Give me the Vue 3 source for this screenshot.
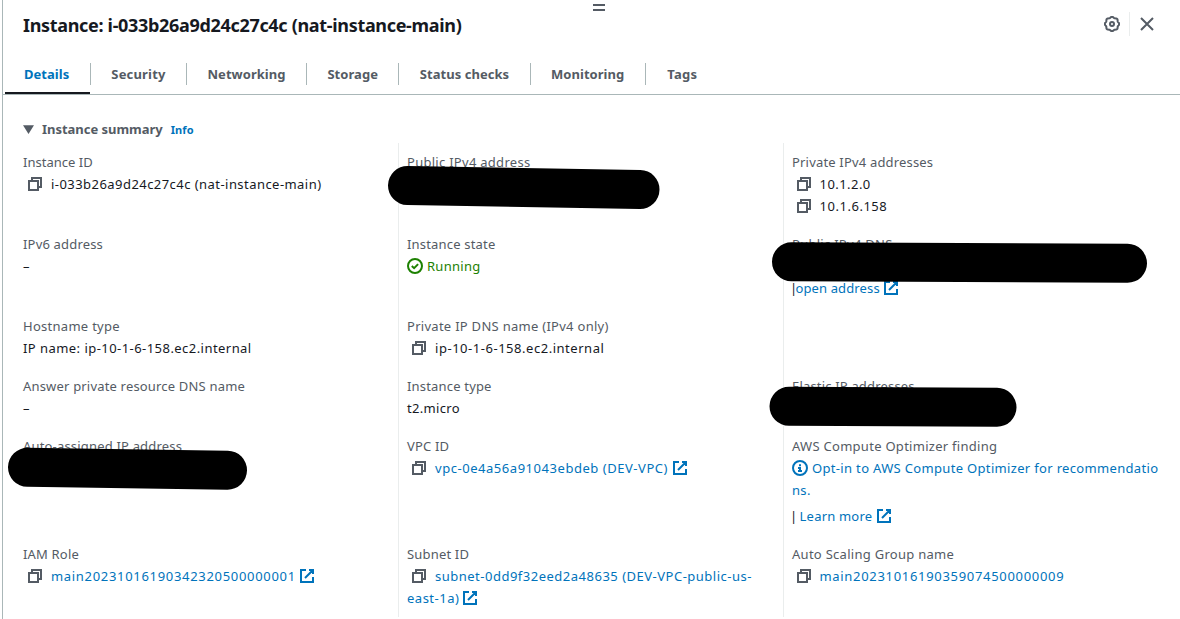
<script setup>
import { h } from 'vue'

const tabs = ['Details', 'Security', 'Networking', 'Storage', 'Status checks', 'Monitoring', 'Tags']

const svg = (name, children) =>
  h('svg', { class: 'icon icon-' + name, viewBox: '0 0 16 16', width: 16, height: 16, fill: 'none', stroke: 'currentColor', 'stroke-width': 2 }, children)

const CopyIcon = () => svg('copy', [h('path', { d: 'M2 5h9v9H2zM5 5V2h9v9h-3' })])
const ExternalIcon = () => svg('external', [h('path', { d: 'M10 2h4v4M6 10l8-8M14 9.05V14H2V2h5' })])
const CheckIcon = () => svg('check', [h('circle', { cx: 8, cy: 8, r: 7 }), h('path', { d: 'M4.8 8.1l2.3 2.1 4-4.1' })])
const InfoIcon = () => svg('info', [h('circle', { cx: 8, cy: 8, r: 7 }), h('path', { d: 'M8 11V8H6M10 11H6' }), h('path', { d: 'M7 5.2h2' })])
const CloseIcon = () => svg('close', [h('path', { d: 'M2 2l12 12M14 2L2 14' })])

const gearPath = Array.from({ length: 96 }, (_, i) => {
  const a = (i / 96) * Math.PI * 2
  const r = 6.75 + 0.5 * Math.cos(8 * a)
  return (i ? 'L' : 'M') + (8 + r * Math.cos(a)).toFixed(2) + ' ' + (8 + r * Math.sin(a)).toFixed(2)
}).join('') + 'Z'
const GearIcon = () => svg('gear', [h('path', { d: gearPath }), h('circle', { cx: 8, cy: 8, r: 2 })])
</script>

<template>
  <section class="panel">
    <div class="handle"></div>
    <header class="header">
      <h2 class="title">Instance: i-033b26a9d24c27c4c (nat-instance-main)</h2>
      <div class="actions">
        <button class="action"><GearIcon /></button>
        <button class="action close"><CloseIcon /></button>
      </div>
    </header>

    <nav class="tabs">
      <div v-for="(tab, i) in tabs" :key="tab" class="tab" :class="{ active: i === 0 }">
        <span class="tab-label">{{ tab }}</span>
      </div>
    </nav>

    <div class="summary">
      <svg class="caret" width="11" height="9" viewBox="0 0 11 9"><path d="M0 0.2h11L5.5 9z" fill="currentColor" /></svg>
      <span class="summary-title">Instance summary</span>
      <a class="info">Info</a>
    </div>

    <div class="grid">
      <div class="cell">
        <div class="label tight">Instance ID</div>
        <div class="value id"><CopyIcon />i-033b26a9d24c27c4c (nat-instance-main)</div>
      </div>
      <div class="cell">
        <div class="label wide">Public IPv4 address</div>
      </div>
      <div class="cell">
        <div class="label">Private IPv4 addresses</div>
        <div class="value id"><CopyIcon />10.1.2.0</div>
        <div class="value ip"><CopyIcon />10.1.6.158</div>
      </div>

      <div class="cell">
        <div class="label">IPv6 address</div>
        <div class="value">–</div>
      </div>
      <div class="cell">
        <div class="label">Instance state</div>
        <div class="value running"><CheckIcon />Running</div>
      </div>
      <div class="cell">
        <div class="label wide">Public IPv4 DNS</div>
        <div class="value blank"></div>
        <div class="value short"><span class="bar">|</span><a>open address</a><ExternalIcon /></div>
      </div>

      <div class="cell">
        <div class="label wide">Hostname type</div>
        <div class="value name">IP name: ip-10-1-6-158.ec2.internal</div>
      </div>
      <div class="cell">
        <div class="label wide">Private IP DNS name (IPv4 only)</div>
        <div class="value ip"><CopyIcon />ip-10-1-6-158.ec2.internal</div>
      </div>
      <div class="cell"></div>

      <div class="cell">
        <div class="label">Answer private resource DNS name</div>
        <div class="value">–</div>
      </div>
      <div class="cell">
        <div class="label">Instance type</div>
        <div class="value optin">t2.micro</div>
      </div>
      <div class="cell">
        <div class="label">Elastic IP addresses</div>
      </div>

      <div class="cell">
        <div class="label">Auto-assigned IP address</div>
      </div>
      <div class="cell">
        <div class="label">VPC ID</div>
        <div class="value vpc"><CopyIcon /><a>vpc-0e4a56a91043ebdeb (DEV-VPC)</a><ExternalIcon /></div>
      </div>
      <div class="cell">
        <div class="label wide">AWS Compute Optimizer finding</div>
        <div class="value optin"><InfoIcon /><a>Opt-in to AWS Compute Optimizer for recommendatio<br>ns.</a></div>
        <div class="value learn"><span class="bar">|</span> <a>Learn more</a><ExternalIcon /></div>
      </div>

      <div class="cell">
        <div class="label">IAM Role</div>
        <div class="value digits"><CopyIcon /><a>main20231016190342320500000001</a><ExternalIcon /></div>
      </div>
      <div class="cell">
        <div class="label">Subnet ID</div>
        <div class="value subnet"><CopyIcon /><a>subnet-0dd9f32eed2a48635 (DEV-VPC-public-us-<br>east-1a)</a><ExternalIcon /></div>
      </div>
      <div class="cell">
        <div class="label wide">Auto Scaling Group name</div>
        <div class="value digits"><CopyIcon /><a>main20231016190359074500000009</a></div>
      </div>
    </div>

    <svg class="redactions" width="1180" height="619" viewBox="0 0 1180 619">
      <path d="M407.5 185.5L640 189.5M791.5 261.8L1127.5 263.3M789 406.3L997 407.3M27.5 467.3L227.5 470.2" />
    </svg>
  </section>
</template>

<style>
body {
  margin: 0;
  background: #fff;
  overflow: hidden;
}
</style>

<style scoped>
.panel {
  position: relative;
  box-sizing: border-box;
  height: 619px;
  margin-left: 2px;
  border-left: 1px solid #aab7b8;
  overflow: hidden;
  background: #fff;
  color: #16191f;
  font: 13px/22px "Noto Sans", "Open Sans", sans-serif;
}
.handle {
  box-sizing: border-box;
  width: 12px;
  height: 7px;
  margin: 4px 0 0 590px;
  border: solid #545b64;
  border-width: 2px 0;
}
.header {
  display: flex;
  justify-content: space-between;
  height: 43px;
  padding: 0 17px 0 20px;
}
.title {
  margin: 0;
  padding-top: 3px;
  font-size: 18px;
  line-height: 22px;
  font-weight: 700;
  letter-spacing: -0.32px;
}
.actions {
  display: flex;
  height: 24px;
  margin-top: 1px;
}
.action {
  display: flex;
  align-items: center;
  padding: 0 9px 0 0;
  border: 0;
  background: none;
  color: #545b64;
}
.action.close {
  padding: 0 8px 0 9px;
  border-left: 1px solid #eaeded;
}
.tabs {
  display: flex;
  height: 40px;
  border-bottom: 1px solid #aab7b8;
}
.tab {
  box-sizing: border-box;
  height: 40px;
  padding-top: 9px;
  color: #545b64;
  font-weight: 700;
  letter-spacing: 0.04px;
}
.tab-label {
  display: block;
  padding: 0 20.45px;
  border-right: 1px solid #aab7b8;
}
.tab:nth-child(2) {
  margin-left: 1px;
  letter-spacing: 0.18px;
}
.tab:last-child {
  letter-spacing: 0.3px;
}
.tab:last-child .tab-label {
  padding-left: 21.5px;
  border-right: 0;
}
.tab.active {
  margin-left: 2px;
  border-bottom: 2px solid #16191f;
  color: #0073bb;
}
.tab.active .tab-label {
  padding-left: 19px;
  padding-right: 20.6px;
  margin-right: -1px;
}
.summary {
  display: flex;
  align-items: center;
  height: 22px;
  margin: 23px 0 0 20px;
  color: #545b64;
}
.caret {
  margin-right: 8px;
}
.summary-title {
  font-weight: 700;
  letter-spacing: -0.03px;
}
.info {
  margin-left: 8px;
  padding-top: 1px;
  font-size: 11px;
  font-weight: 700;
  letter-spacing: 0.1px;
  color: #0073bb;
}
.grid {
  display: grid;
  grid-template-columns: 375px 385px 385px;
  grid-template-rows: 90px 82px 60px 60px 108px 74px;
  margin: 3px 0 0 20px;
}
.cell {
  padding-left: 8px;
  border-left: 1px solid #eaeded;
  white-space: nowrap;
}
.cell:nth-child(3n + 1) {
  padding-left: 0;
  border-left: 0;
}
.cell:nth-child(-n + 3) {
  padding-top: 8px;
}
.label {
  color: #545b64;
  letter-spacing: 0.18px;
}
.label.tight {
  letter-spacing: 0.02px;
}
.label.wide {
  letter-spacing: 0.28px;
}
.value {
  min-height: 22px;
  letter-spacing: 0.2px;
}
.value.id,
.value.name {
  letter-spacing: 0.45px;
}
.value.ip {
  letter-spacing: 0.53px;
}
.value.vpc {
  letter-spacing: 0.54px;
}
.value.subnet {
  letter-spacing: 0.5px;
}
.value.optin {
  letter-spacing: 0.33px;
}
.value.learn {
  margin-top: 4px;
}
.value.digits {
  letter-spacing: 0.69px;
}
.value.short {
  letter-spacing: 0.12px;
}
a {
  color: #0073bb;
}
.running {
  color: #1d8102;
}
.value.running {
  letter-spacing: 0.28px;
}
.bar {
  display: inline-block;
  width: 4px;
  text-indent: -2px;
}
.short .bar {
  width: 3.5px;
}
.icon {
  display: inline-block;
  width: 16px;
  height: 16px;
  vertical-align: -3px;
}
.icon-copy {
  margin: 0 8px 0 4px;
  color: #545b64;
}
.cell:nth-child(3n) .icon-copy {
  margin-right: 7.5px;
}
.icon-external {
  margin-left: 4px;
  color: #0073bb;
}
.short .icon-external {
  margin-left: 3.3px;
}
.digits .icon-external,
.subnet .icon-external {
  margin-left: 3px;
}
.icon-check {
  margin-right: 4px;
}
.icon-info {
  margin-right: 4px;
  color: #0073bb;
}
.redactions {
  position: absolute;
  top: 0;
  left: -3px;
  fill: none;
  stroke: #000;
  stroke-width: 39px;
  stroke-linecap: round;
}
</style>
